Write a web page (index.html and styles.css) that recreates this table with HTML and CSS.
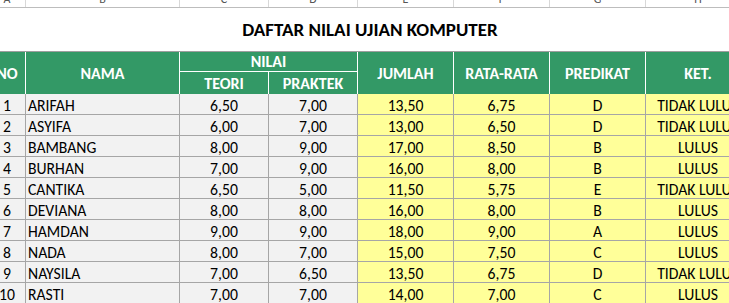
FILE: index.html
```html
<!DOCTYPE html>
<html lang="id">
<head>
<meta charset="utf-8">
<title>Daftar Nilai Ujian Komputer</title>
<link rel="stylesheet" href="styles.css">
</head>
<body>
<div class="sheet">
  <div class="grid colheads">
    <div class="ch">A</div><div class="ch">B</div><div class="ch">C</div><div class="ch">D</div>
    <div class="ch">E</div><div class="ch">F</div><div class="ch">G</div><div class="ch">H</div>
  </div>
  <div class="title">DAFTAR NILAI UJIAN KOMPUTER</div>
  <div class="grid head">
    <div class="h no span2">NO</div>
    <div class="h span2">NAMA</div>
    <div class="h nilai">NILAI</div>
    <div class="h span2">JUMLAH</div>
    <div class="h span2">RATA-RATA</div>
    <div class="h span2">PREDIKAT</div>
    <div class="h span2">KET.</div>
    <div class="h sub">TEORI</div>
    <div class="h sub">PRAKTEK</div>
  </div>
  <div class="grid body">
    <div class="c g">1</div><div class="c g l">ARIFAH</div><div class="c g">6,50</div><div class="c g">7,00</div><div class="c y">13,50</div><div class="c y">6,75</div><div class="c y">D</div><div class="c y">TIDAK LULUS</div>
    <div class="c g">2</div><div class="c g l">ASYIFA</div><div class="c g">6,00</div><div class="c g">7,00</div><div class="c y">13,00</div><div class="c y">6,50</div><div class="c y">D</div><div class="c y">TIDAK LULUS</div>
    <div class="c g">3</div><div class="c g l">BAMBANG</div><div class="c g">8,00</div><div class="c g">9,00</div><div class="c y">17,00</div><div class="c y">8,50</div><div class="c y">B</div><div class="c y">LULUS</div>
    <div class="c g">4</div><div class="c g l">BURHAN</div><div class="c g">7,00</div><div class="c g">9,00</div><div class="c y">16,00</div><div class="c y">8,00</div><div class="c y">B</div><div class="c y">LULUS</div>
    <div class="c g">5</div><div class="c g l">CANTIKA</div><div class="c g">6,50</div><div class="c g">5,00</div><div class="c y">11,50</div><div class="c y">5,75</div><div class="c y">E</div><div class="c y">TIDAK LULUS</div>
    <div class="c g">6</div><div class="c g l">DEVIANA</div><div class="c g">8,00</div><div class="c g">8,00</div><div class="c y">16,00</div><div class="c y">8,00</div><div class="c y">B</div><div class="c y">LULUS</div>
    <div class="c g">7</div><div class="c g l">HAMDAN</div><div class="c g">9,00</div><div class="c g">9,00</div><div class="c y">18,00</div><div class="c y">9,00</div><div class="c y">A</div><div class="c y">LULUS</div>
    <div class="c g">8</div><div class="c g l">NADA</div><div class="c g">8,00</div><div class="c g">7,00</div><div class="c y">15,00</div><div class="c y">7,50</div><div class="c y">C</div><div class="c y">LULUS</div>
    <div class="c g">9</div><div class="c g l">NAYSILA</div><div class="c g">7,00</div><div class="c g">6,50</div><div class="c y">13,50</div><div class="c y">6,75</div><div class="c y">D</div><div class="c y">TIDAK LULUS</div>
    <div class="c g">10</div><div class="c g l">RASTI</div><div class="c g">7,00</div><div class="c g">7,00</div><div class="c y">14,00</div><div class="c y">7,00</div><div class="c y">C</div><div class="c y">LULUS</div>
  </div>
</div>
</body>
</html>
```
FILE: styles.css
```css
html, body {
  margin: 0;
  padding: 0;
  background: #ffffff;
  overflow: hidden;
}
body {
  width: 729px;
  height: 303px;
  font-family: Carlito, "Open Sans", "Liberation Sans", sans-serif;
  color: #000000;
}
.sheet {
  width: 762px;
  margin-left: -11px;
}
.grid {
  display: grid;
  grid-template-columns: 37px 154px 89px 89px 96px 96px 96px 105px;
}
.colheads {
  height: 8px;
  overflow: hidden;
  border-bottom: 1px solid #bdbdbd;
  box-sizing: border-box;
}
.ch {
  border-right: 1px solid #d8d8d8;
  display: flex;
  align-items: flex-end;
  justify-content: center;
  font-size: 12px;
  line-height: 12px;
  padding-bottom: 2px;
  color: #555555;
  height: 7px;
  box-sizing: border-box;
}
.title {
  height: 44px;
  box-sizing: border-box;
  text-align: center;
  font-weight: 700;
  font-size: 19px;
  line-height: 24px;
  padding-top: 10px;
  border-bottom: 1px solid #9e9e9e;
}
.head {
  grid-template-rows: 20px 22px;
  background: #339966;
  color: #ffffff;
  font-weight: 700;
  font-size: 16px;
}
.h {
  display: flex;
  align-items: center;
  justify-content: center;
  border-right: 1px solid #ffffff;
  box-sizing: border-box;
}
.span2 {
  grid-row: span 2;
}
.nilai {
  grid-column: span 2;
  border-bottom: 1px solid #ffffff;
}
.sub {
  grid-row: 2;
}
.sub:nth-child(8) { grid-column: 3; }
.sub:nth-child(9) { grid-column: 4; }
.body {
  grid-auto-rows: 21px;
  font-size: 15.7px;
}
.c {
  box-sizing: border-box;
  border-right: 1px solid #a6a6a6;
  border-bottom: 1px solid #a6a6a6;
  display: flex;
  align-items: flex-end;
  justify-content: center;
  line-height: 17px;
  white-space: nowrap;
  overflow: hidden;
}
.g { background: #f2f2f2; }
.y { background: #ffff99; }
.l {
  justify-content: flex-start;
  padding-left: 2px;
}
```
